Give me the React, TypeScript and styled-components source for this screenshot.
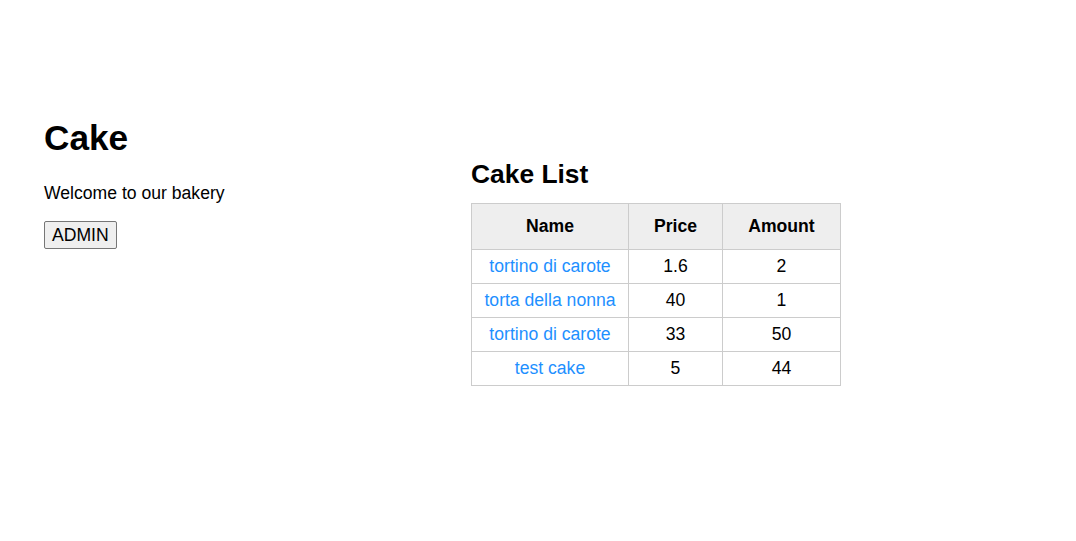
import React from "react";
import styled, { createGlobalStyle } from "styled-components";

const Global = createGlobalStyle`
  html, body { margin: 0; padding: 0; background: #fff; }
  body { font-family: "Liberation Sans", Arial, sans-serif; color: #000; }
`;

const Page = styled.div`
  display: flex;
  align-items: flex-start;
  padding: 118px 0 0 44px;
`;

const Intro = styled.section`
  width: 427px;
  display: flex;
  flex-direction: column;
  align-items: flex-start;
`;

const Title = styled.h1`
  margin: 0 0 25px;
  font-size: 35.2px;
  line-height: 40px;
  font-weight: bold;
`;

const Text = styled.p`
  margin: 0 0 18px;
  font-size: 17.6px;
  line-height: 20px;
`;

const AdminButton = styled.button`
  font-family: "Liberation Sans", Arial, sans-serif;
  font-size: 17.6px;
  line-height: 20px;
  padding: 3px 7px;
  border: 1px solid #767676;
  border-radius: 2px;
  background: #efefef;
  color: #000;
`;

const ListSection = styled.section`
  padding-top: 41px;
`;

const SubTitle = styled.h2`
  margin: 0 0 14px;
  font-size: 26.4px;
  line-height: 30px;
  font-weight: bold;
`;

const Table = styled.table`
  border-collapse: collapse;
  table-layout: fixed;
  width: 370px;
  font-size: 17.6px;
  line-height: 20px;
`;

const Th = styled.th`
  background: #eee;
  border: 1px solid #ccc;
  padding: 12px 10px 13px;
  font-weight: bold;
  text-align: center;
`;

const Td = styled.td`
  border: 1px solid #ccc;
  padding: 6px 10px 7px;
  text-align: center;
`;

const CakeLink = styled.a`
  color: #1e90ff;
  text-decoration: none;
`;

const cakes = [
  { name: "tortino di carote", price: "1.6", amount: "2" },
  { name: "torta della nonna", price: "40", amount: "1" },
  { name: "tortino di carote", price: "33", amount: "50" },
  { name: "test cake", price: "5", amount: "44" },
];

export default function App() {
  return (
    <>
      <Global />
      <Page>
        <Intro>
          <Title>Cake</Title>
          <Text>Welcome to our bakery</Text>
          <AdminButton>ADMIN</AdminButton>
        </Intro>
        <ListSection>
          <SubTitle>Cake List</SubTitle>
          <Table>
            <colgroup>
              <col style={{ width: 157 }} />
              <col style={{ width: 94 }} />
              <col style={{ width: 118 }} />
            </colgroup>
            <thead>
              <tr>
                <Th>Name</Th>
                <Th>Price</Th>
                <Th>Amount</Th>
              </tr>
            </thead>
            <tbody>
              {cakes.map((c, i) => (
                <tr key={i}>
                  <Td>
                    <CakeLink href="#">{c.name}</CakeLink>
                  </Td>
                  <Td>{c.price}</Td>
                  <Td>{c.amount}</Td>
                </tr>
              ))}
            </tbody>
          </Table>
        </ListSection>
      </Page>
    </>
  );
}
